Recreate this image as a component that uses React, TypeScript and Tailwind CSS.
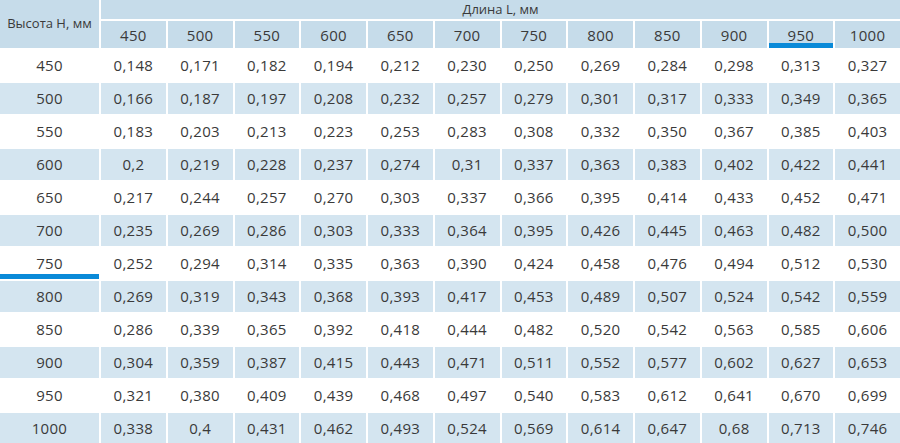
import React from "react";

const cols = [450, 500, 550, 600, 650, 700, 750, 800, 850, 900, 950, 1000];
const data: [number, string[]][] = [
  [450, ["0,148","0,171","0,182","0,194","0,212","0,230","0,250","0,269","0,284","0,298","0,313","0,327"]],
  [500, ["0,166","0,187","0,197","0,208","0,232","0,257","0,279","0,301","0,317","0,333","0,349","0,365"]],
  [550, ["0,183","0,203","0,213","0,223","0,253","0,283","0,308","0,332","0,350","0,367","0,385","0,403"]],
  [600, ["0,2","0,219","0,228","0,237","0,274","0,31","0,337","0,363","0,383","0,402","0,422","0,441"]],
  [650, ["0,217","0,244","0,257","0,270","0,303","0,337","0,366","0,395","0,414","0,433","0,452","0,471"]],
  [700, ["0,235","0,269","0,286","0,303","0,333","0,364","0,395","0,426","0,445","0,463","0,482","0,500"]],
  [750, ["0,252","0,294","0,314","0,335","0,363","0,390","0,424","0,458","0,476","0,494","0,512","0,530"]],
  [800, ["0,269","0,319","0,343","0,368","0,393","0,417","0,453","0,489","0,507","0,524","0,542","0,559"]],
  [850, ["0,286","0,339","0,365","0,392","0,418","0,444","0,482","0,520","0,542","0,563","0,585","0,606"]],
  [900, ["0,304","0,359","0,387","0,415","0,443","0,471","0,511","0,552","0,577","0,602","0,627","0,653"]],
  [950, ["0,321","0,380","0,409","0,439","0,468","0,497","0,540","0,583","0,612","0,641","0,670","0,699"]],
  [1000, ["0,338","0,4","0,431","0,462","0,493","0,524","0,569","0,614","0,647","0,68","0,713","0,746"]],
];

export default function App() {
  return (
    <div
      className="w-[900px] h-[443px] overflow-hidden bg-white text-[#3a3a3a]"
      style={{ fontFamily: '"Open Sans", "Noto Sans", sans-serif' }}
    >
      <div className="grid grid-cols-[99px_repeat(12,1fr)] grid-rows-[19px_27px_repeat(12,31px)] gap-[2px]">
        <div className="row-span-2 bg-[#c6dcea] flex items-center justify-center text-[13px] pb-[1px]">
          Высота Н, мм
        </div>
        <div className="col-span-12 bg-[#c6dcea] flex items-center justify-center text-[13px]">
          Длина L, мм
        </div>
        {cols.map((c) => (
          <div
            key={c}
            className={
              "bg-[#c6dcea] flex items-center justify-center text-[15px] tracking-[0.3px] pt-[1px] " +
              (c === 950 ? "border-b-[5px] border-[#0a8ad8] pt-[6px]" : "")
            }
          >
            {c}
          </div>
        ))}
        {data.map(([h, vals], i) => {
          const bg = i % 2 === 1 ? "bg-[#d4e5f0]" : "bg-white";
          return (
            <React.Fragment key={h}>
              <div
                className={
                  bg +
                  " flex items-center justify-center text-[15px] tracking-[0.3px] " +
                  (h === 750 ? "border-b-[5px] border-[#0a8ad8] pt-[5px]" : "")
                }
              >
                {h}
              </div>
              {vals.map((v, j) => (
                <div
                  key={j}
                  className={bg + " flex items-center justify-center text-[15px] tracking-[0.3px]"}
                >
                  {v}
                </div>
              ))}
            </React.Fragment>
          );
        })}
      </div>
    </div>
  );
}
